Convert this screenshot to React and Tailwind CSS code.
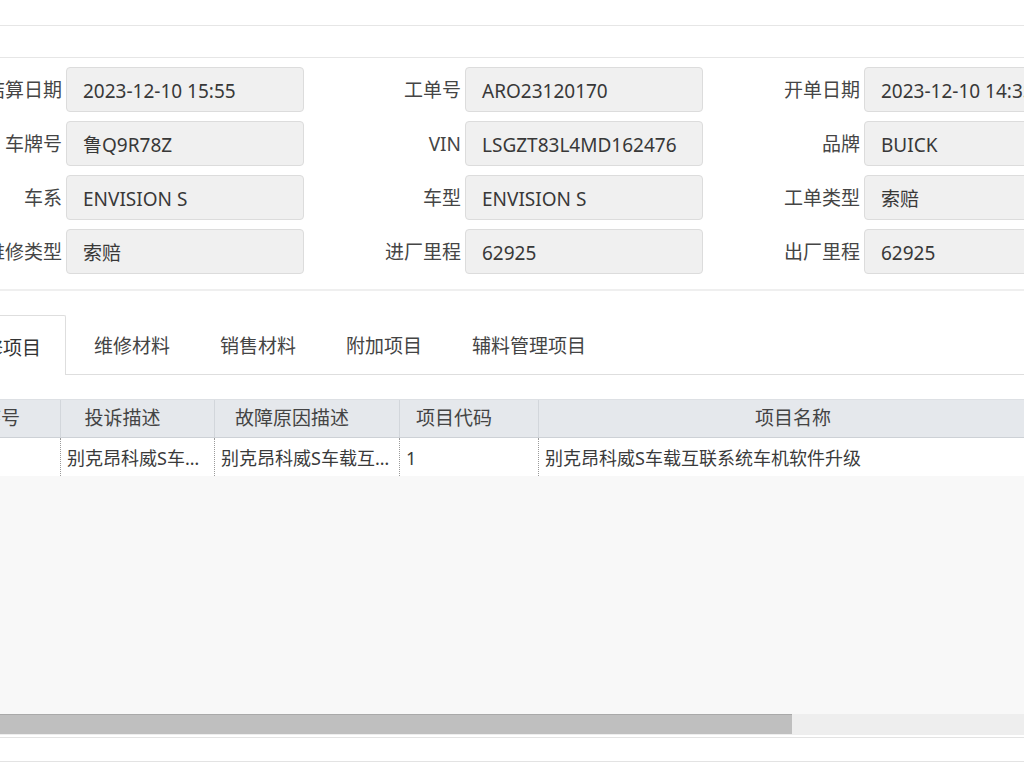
import React from "react";

const fields = [
  [
    ["结算日期", "2023-12-10 15:55"],
    ["工单号", "ARO23120170"],
    ["开单日期", "2023-12-10 14:35"],
  ],
  [
    ["车牌号", "鲁Q9R78Z"],
    ["VIN", "LSGZT83L4MD162476"],
    ["品牌", "BUICK"],
  ],
  [
    ["车系", "ENVISION S"],
    ["车型", "ENVISION S"],
    ["工单类型", "索赔"],
  ],
  [
    ["维修类型", "索赔"],
    ["进厂里程", "62925"],
    ["出厂里程", "62925"],
  ],
];

const tabs = ["维修项目", "维修材料", "销售材料", "附加项目", "辅料管理项目"];

const columns = [
  { title: "序号", w: "w-[119px]", head: "text-center" },
  { title: "投诉描述", w: "w-[154px]", head: "text-center pr-[30px]" },
  { title: "故障原因描述", w: "w-[185px]", head: "text-center pr-[30px]" },
  { title: "项目代码", w: "w-[139px]", head: "text-center pr-[30px]" },
  { title: "项目名称", w: "w-[538px]", head: "text-center pr-[30px]" },
];

const row = [
  "",
  "别克昂科威S车载互联系统车机软件升级",
  "别克昂科威S车载互联系统车机软件升级",
  "1",
  "别克昂科威S车载互联系统车机软件升级",
];

function Field({ label, value }) {
  return (
    <div className="flex items-center w-[399px] shrink-0">
      <div className="w-[95px] shrink-0 pr-[4px] pt-[2px] text-right text-[#454545] whitespace-nowrap">
        {label}
      </div>
      <div className="w-[238px] h-[45px] shrink-0 flex items-center px-[16px] pt-[3px] bg-[#f0f0f0] border border-[#dcdcdc] rounded-[4px] text-[#383838] whitespace-nowrap overflow-hidden">
        {value}
      </div>
    </div>
  );
}

export default function App() {
  return (
    <div
      className="w-[1024px] h-[768px] overflow-hidden bg-white text-[19px] leading-none"
      style={{ fontFamily: '"Noto Sans", "Noto Sans CJK SC", sans-serif' }}
    >
      <div className="ml-[-58px] w-[1200px]">
        {/* header strips */}
        <div className="h-[26px] border-b border-[#e6e6e6]" />
        <div className="h-[32px] border-b border-[#e6e6e6]" />

        {/* order info form */}
        <div className="pl-[29px] pt-[9px] pb-[15px] flex flex-col gap-[9px] border-b-2 border-[#efefef]">
          {fields.map((r, i) => (
            <div key={i} className="flex">
              {r.map(([l, v]) => (
                <Field key={l} label={l} value={v} />
              ))}
            </div>
          ))}
        </div>

        {/* tabs */}
        <div className="mt-[24px] flex items-end h-[60px] border-b border-[#dedede]">
          <div className="flex items-end ml-[-2px]">
            {tabs.map((t, i) => (
              <div
                key={t}
                className={
                  i === 0
                    ? "h-[60px] px-[24px] pt-[5px] flex items-center border border-b-0 border-[#dedede] bg-white text-[#333] mb-[-1px] rounded-t-[2px]"
                    : "h-[60px] pl-[27px] pr-[21px] pt-[5px] flex items-center border border-transparent text-[#444]"
                }
              >
                {t}
              </div>
            ))}
          </div>
        </div>

        {/* grid */}
        <div className="mt-[24px]">
          <div className="flex h-[39px] bg-[#e5e8ec] border-t border-[#dde0e4] border-b border-b-[#cdd1d6]">
            {columns.map((c, i) => (
              <div
                key={c.title}
                className={`${c.w} shrink-0 flex items-center justify-center ${c.head} text-[#444] ${
                  i < columns.length - 1 ? "border-r border-[#d2d6db]" : ""
                }`}
              >
                {c.title}
              </div>
            ))}
          </div>
          <div className="flex h-[38px] bg-white text-[18px]">
            {columns.map((c, i) => (
              <div
                key={c.title}
                className={`${c.w} shrink-0 flex items-center px-[6px] pt-[1px] text-[#3a3a3a] ${
                  i < columns.length - 1 ? "border-r border-dotted border-[#9a9a9a]" : ""
                }`}
              >
                <span className="block truncate">{row[i]}</span>
              </div>
            ))}
          </div>
          <div className="h-[238px] bg-[#f8f8f8]" />

          {/* horizontal scrollbar */}
          <div className="flex h-[21px] bg-[#eeeeee]">
            <div className="w-[850px] h-[20px] bg-[#bfbfbf] border-t border-[#a9a9a9] shrink-0" />
          </div>
          <div className="h-[2px] bg-white" />
          <div className="h-[25px] border-t border-b border-[#e3e3e3] bg-white" />
        </div>
      </div>
    </div>
  );
}
